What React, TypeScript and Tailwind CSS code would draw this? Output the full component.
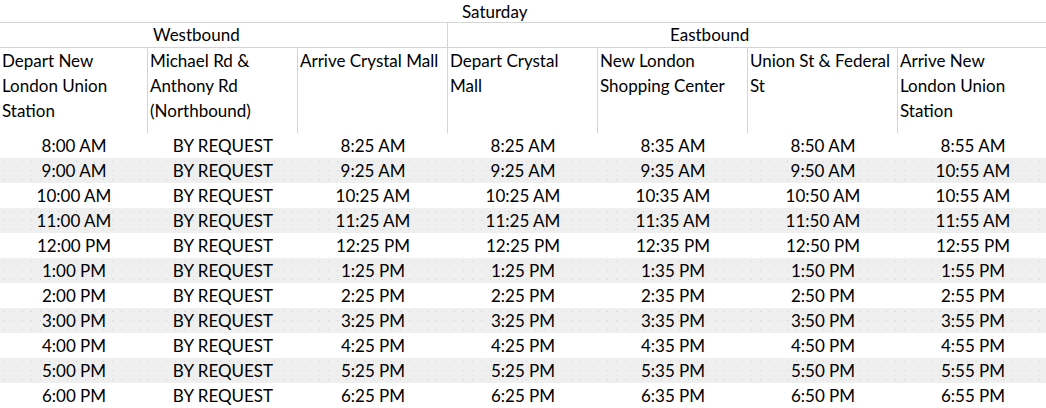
const HEADERS = [
  ["Depart New", "London Union", "Station"],
  ["Michael Rd &", "Anthony Rd", "(Northbound)"],
  ["Arrive Crystal Mall"],
  ["Depart Crystal", "Mall"],
  ["New London", "Shopping Center"],
  ["Union St & Federal", "St"],
  ["Arrive New", "London Union", "Station"],
];

const ROWS: string[][] = [
  ["8:00 AM", "BY REQUEST", "8:25 AM", "8:25 AM", "8:35 AM", "8:50 AM", "8:55 AM"],
  ["9:00 AM", "BY REQUEST", "9:25 AM", "9:25 AM", "9:35 AM", "9:50 AM", "10:55 AM"],
  ["10:00 AM", "BY REQUEST", "10:25 AM", "10:25 AM", "10:35 AM", "10:50 AM", "10:55 AM"],
  ["11:00 AM", "BY REQUEST", "11:25 AM", "11:25 AM", "11:35 AM", "11:50 AM", "11:55 AM"],
  ["12:00 PM", "BY REQUEST", "12:25 PM", "12:25 PM", "12:35 PM", "12:50 PM", "12:55 PM"],
  ["1:00 PM", "BY REQUEST", "1:25 PM", "1:25 PM", "1:35 PM", "1:50 PM", "1:55 PM"],
  ["2:00 PM", "BY REQUEST", "2:25 PM", "2:25 PM", "2:35 PM", "2:50 PM", "2:55 PM"],
  ["3:00 PM", "BY REQUEST", "3:25 PM", "3:25 PM", "3:35 PM", "3:50 PM", "3:55 PM"],
  ["4:00 PM", "BY REQUEST", "4:25 PM", "4:25 PM", "4:35 PM", "4:50 PM", "4:55 PM"],
  ["5:00 PM", "BY REQUEST", "5:25 PM", "5:25 PM", "5:35 PM", "5:50 PM", "5:55 PM"],
  ["6:00 PM", "BY REQUEST", "6:25 PM", "6:25 PM", "6:35 PM", "6:50 PM", "6:55 PM"],
];

const COLS = "grid grid-cols-[148px_150px_150px_150px_150px_150px_150px]";

export default function App() {
  return (
    <div className="w-[1046px] h-[408px] overflow-hidden bg-white text-black font-['Lato',sans-serif] text-[17px] leading-[25px]">
      {/* title */}
      <div className="h-[23px] leading-[23px] border-b border-[#d4d4d4] pl-[462px]">Saturday</div>

      {/* direction */}
      <div className="flex h-[25px] leading-[24px] border-b border-[#d4d4d4]">
        <div className="w-[448px] pl-[153px] border-r border-[#d4d4d4]">Westbound</div>
        <div className="pl-[222px]">Eastbound</div>
      </div>

      {/* stop names */}
      <div className={`${COLS} w-[1048px] h-[85px]`}>
        {HEADERS.map((lines, i) => (
          <div key={i} className={`pl-[2px] ${i < 6 ? "border-r border-[#d4d4d4]" : ""}`}>
            {lines.map((l) => (
              <div key={l} className="whitespace-nowrap">{l}</div>
            ))}
          </div>
        ))}
      </div>

      {/* times */}
      {ROWS.map((row, r) => (
        <div
          key={r}
          className={`${COLS} w-[1048px] h-[25px] ${
            r % 2 === 1
              ? "bg-[#efefef] bg-[radial-gradient(circle,#d2d2d2_0.7px,transparent_1px)] bg-[length:9px_9px] bg-[position:0_8px]"
              : "bg-white"
          }`}
        >
          {row.map((c, i) => (
            <div key={i} className="text-center whitespace-nowrap">{c}</div>
          ))}
        </div>
      ))}
    </div>
  );
}
